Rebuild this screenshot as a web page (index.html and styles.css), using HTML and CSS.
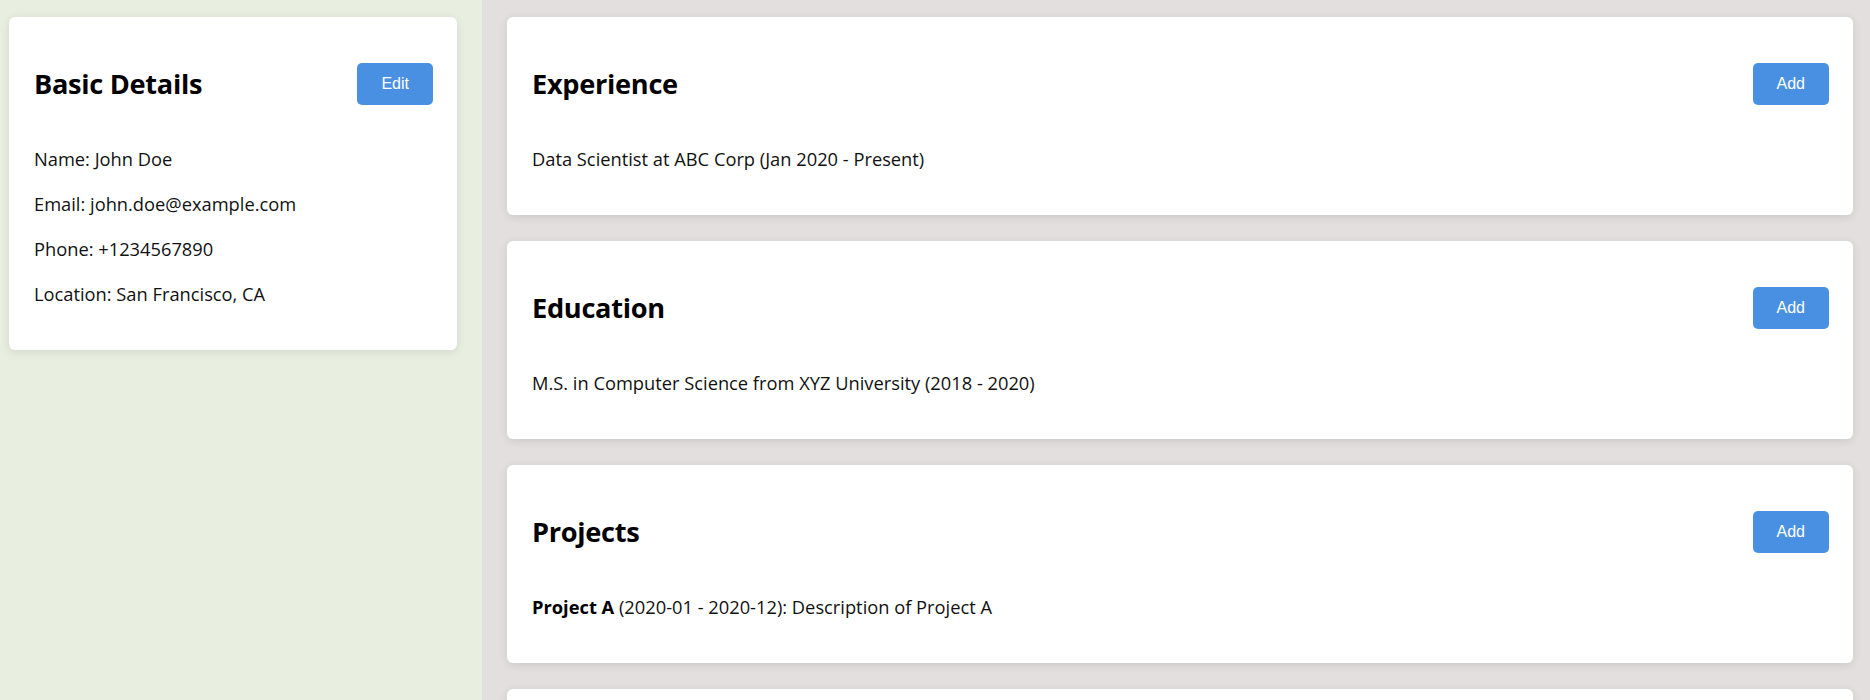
FILE: index.html
```html
<!DOCTYPE html>
<html lang="en">
<head>
<meta charset="utf-8">
<title>Profile</title>
<link rel="stylesheet" href="styles.css">
</head>
<body>
<div class="layout">
  <aside class="sidebar">
    <section class="card">
      <div class="card-header">
        <h2>Basic Details</h2>
        <button class="btn">Edit</button>
      </div>
      <p>Name: John Doe</p>
      <p>Email: john.doe@example.com</p>
      <p>Phone: +1234567890</p>
      <p>Location: San Francisco, CA</p>
    </section>
  </aside>
  <main class="main">
    <section class="card">
      <div class="card-header">
        <h2>Experience</h2>
        <button class="btn">Add</button>
      </div>
      <p>Data Scientist at ABC Corp (Jan 2020 - Present)</p>
    </section>
    <section class="card">
      <div class="card-header">
        <h2>Education</h2>
        <button class="btn">Add</button>
      </div>
      <p>M.S. in Computer Science from XYZ University (2018 - 2020)</p>
    </section>
    <section class="card">
      <div class="card-header">
        <h2>Projects</h2>
        <button class="btn">Add</button>
      </div>
      <p><strong>Project A</strong> (2020-01 - 2020-12): Description of Project A</p>
    </section>
    <section class="card card-next"></section>
  </main>
</div>
</body>
</html>
```

FILE: styles.css
```css
html, body {
  margin: 0;
  padding: 0;
}

body {
  font-family: "Open Sans", "Noto Sans", sans-serif;
  color: #111;
  overflow: hidden;
}

.layout {
  display: flex;
  min-height: 100vh;
}

.sidebar {
  width: 482px;
  flex: none;
  box-sizing: border-box;
  background: #e8efe1;
  padding: 17px 25px 0 9px;
}

.main {
  flex: 1;
  background: #e2dfde;
  padding: 17px 17px 0 25px;
  display: flex;
  flex-direction: column;
  gap: 26px;
}

.card {
  background: #ffffff;
  border-radius: 6px;
  padding: 24px 24px 24px 25px;
  box-shadow: 0 2px 10px rgba(0, 0, 0, 0.1);
}

.card-next {
  min-height: 150px;
}

.card-header {
  display: flex;
  justify-content: space-between;
  align-items: center;
}

.card-header h2 {
  margin: 24px 0;
  font-size: 27.2px;
  line-height: 38px;
  font-weight: 700;
  color: #000;
  letter-spacing: -0.3px;
}

.card p {
  margin: 19px 0;
  font-size: 18.3px;
  line-height: 26px;
}

.card p strong {
  font-weight: 700;
  color: #000;
}

.btn {
  background: #4a90e2;
  color: #ffffff;
  border: none;
  border-radius: 5px;
  padding: 12px 24px;
  font-family: "Liberation Sans", Arial, sans-serif;
  font-size: 16px;
  line-height: 18px;
  cursor: pointer;
}
```
